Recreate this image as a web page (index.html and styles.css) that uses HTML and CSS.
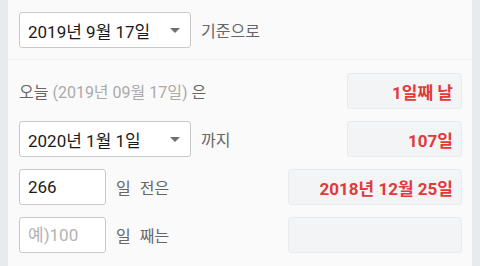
FILE: index.html
```html
<!DOCTYPE HTML>
<html>
<head>
    <meta charset='utf-8'>
    <meta name='viewport' content='width=device-width'>
    <link rel="stylesheet" href="styles.css">
</head>
<body>
    <div class="frame">
        <div class="sideBar"></div>
        <div class="calcPanel">

            <!-- 기준 날짜 -->
            <div class="baseRow">
                <div class="dateSelect">
                    <span>2019년 9월 17일</span>
                    <span class="caret"></span>
                </div>
                <label class="rowLabel">기준으로</label>
            </div>

            <div class="rows">
                <!-- 오늘 -->
                <div class="calcRow">
                    <div class="rowLeft">
                        <span class="rowLabel">오늘 <span class="dim">(2019년 09월 17일)</span> 은</span>
                    </div>
                    <div class="resultBox narrow">1일째 날</div>
                </div>

                <!-- 까지 -->
                <div class="calcRow">
                    <div class="rowLeft">
                        <div class="dateSelect">
                            <span>2020년 1월 1일</span>
                            <span class="caret"></span>
                        </div>
                        <label class="rowLabel">까지</label>
                    </div>
                    <div class="resultBox narrow">107일</div>
                </div>

                <!-- 일 전 -->
                <div class="calcRow">
                    <div class="rowLeft">
                        <input class="dayInput" type="text" value="266">
                        <label class="rowLabel spaced">일 전은</label>
                    </div>
                    <div class="resultBox wide">2018년 12월 25일</div>
                </div>

                <!-- 일 째 -->
                <div class="calcRow">
                    <div class="rowLeft">
                        <input class="dayInput" type="text" placeholder="예)100">
                        <label class="rowLabel spaced">일 째는</label>
                    </div>
                    <div class="resultBox wide"></div>
                </div>
            </div>

        </div>
        <div class="sideBar"></div>
    </div>
</body>
</html>
```

FILE: styles.css
```css
body {
    margin: 0;
    font-family: Roboto, "Noto Sans CJK KR", sans-serif;
    font-size: 16px;
    background-color: #fafafa;
}

.frame {
    display: flex;
    width: 480px;
    height: 266px;
    overflow: hidden;
}

.sideBar {
    width: 8px;
    flex: 0 0 8px;
    background-color: #e7eaee;
}

.calcPanel {
    flex: 1 1 auto;
    background-color: #fafafa;
}

.baseRow {
    display: flex;
    align-items: center;
    gap: 10px;
    padding: 12px 10px 11px 11px;
    border-bottom: 1px solid #eeeeee;
}

.rows {
    display: flex;
    flex-direction: column;
    gap: 12px;
    padding: 13px 10px 0 11px;
}

.calcRow {
    display: flex;
    align-items: center;
    justify-content: space-between;
    height: 36px;
}

.rowLeft {
    display: flex;
    align-items: center;
    gap: 10px;
}

.rowLabel {
    color: #666;
    white-space: nowrap;
}

.spaced {
    word-spacing: 5px;
}

.dim {
    color: #aaa;
}

.dateSelect {
    box-sizing: border-box;
    width: 172px;
    height: 36px;
    display: flex;
    align-items: center;
    justify-content: space-between;
    padding: 0 10px 0 8px;
    background-color: #fff;
    border: 1px solid #c9c9c9;
    border-radius: 3px;
    color: #1a1a1a;
    font-size: 17px;
}

.caret {
    width: 0;
    height: 0;
    border-left: 5px solid transparent;
    border-right: 5px solid transparent;
    border-top: 5px solid #6f6f6f;
}

.dayInput {
    box-sizing: border-box;
    width: 87px;
    height: 36px;
    padding: 0 8px;
    font-family: inherit;
    font-size: 17px;
    color: #1a1a1a;
    background-color: #fff;
    border: 1px solid #c9c9c9;
    border-radius: 3px;
    outline: none;
}

.dayInput::placeholder {
    color: #b3b3b3;
}

.resultBox {
    box-sizing: border-box;
    height: 36px;
    display: flex;
    align-items: center;
    justify-content: flex-end;
    padding-right: 8px;
    background-color: #f2f4f6;
    border: 1px solid #e8ebee;
    border-radius: 3px;
    color: #e03a3a;
    font-size: 17px;
    font-weight: bold;
    white-space: nowrap;
}

.narrow {
    width: 115px;
}

.wide {
    width: 174px;
}
```
